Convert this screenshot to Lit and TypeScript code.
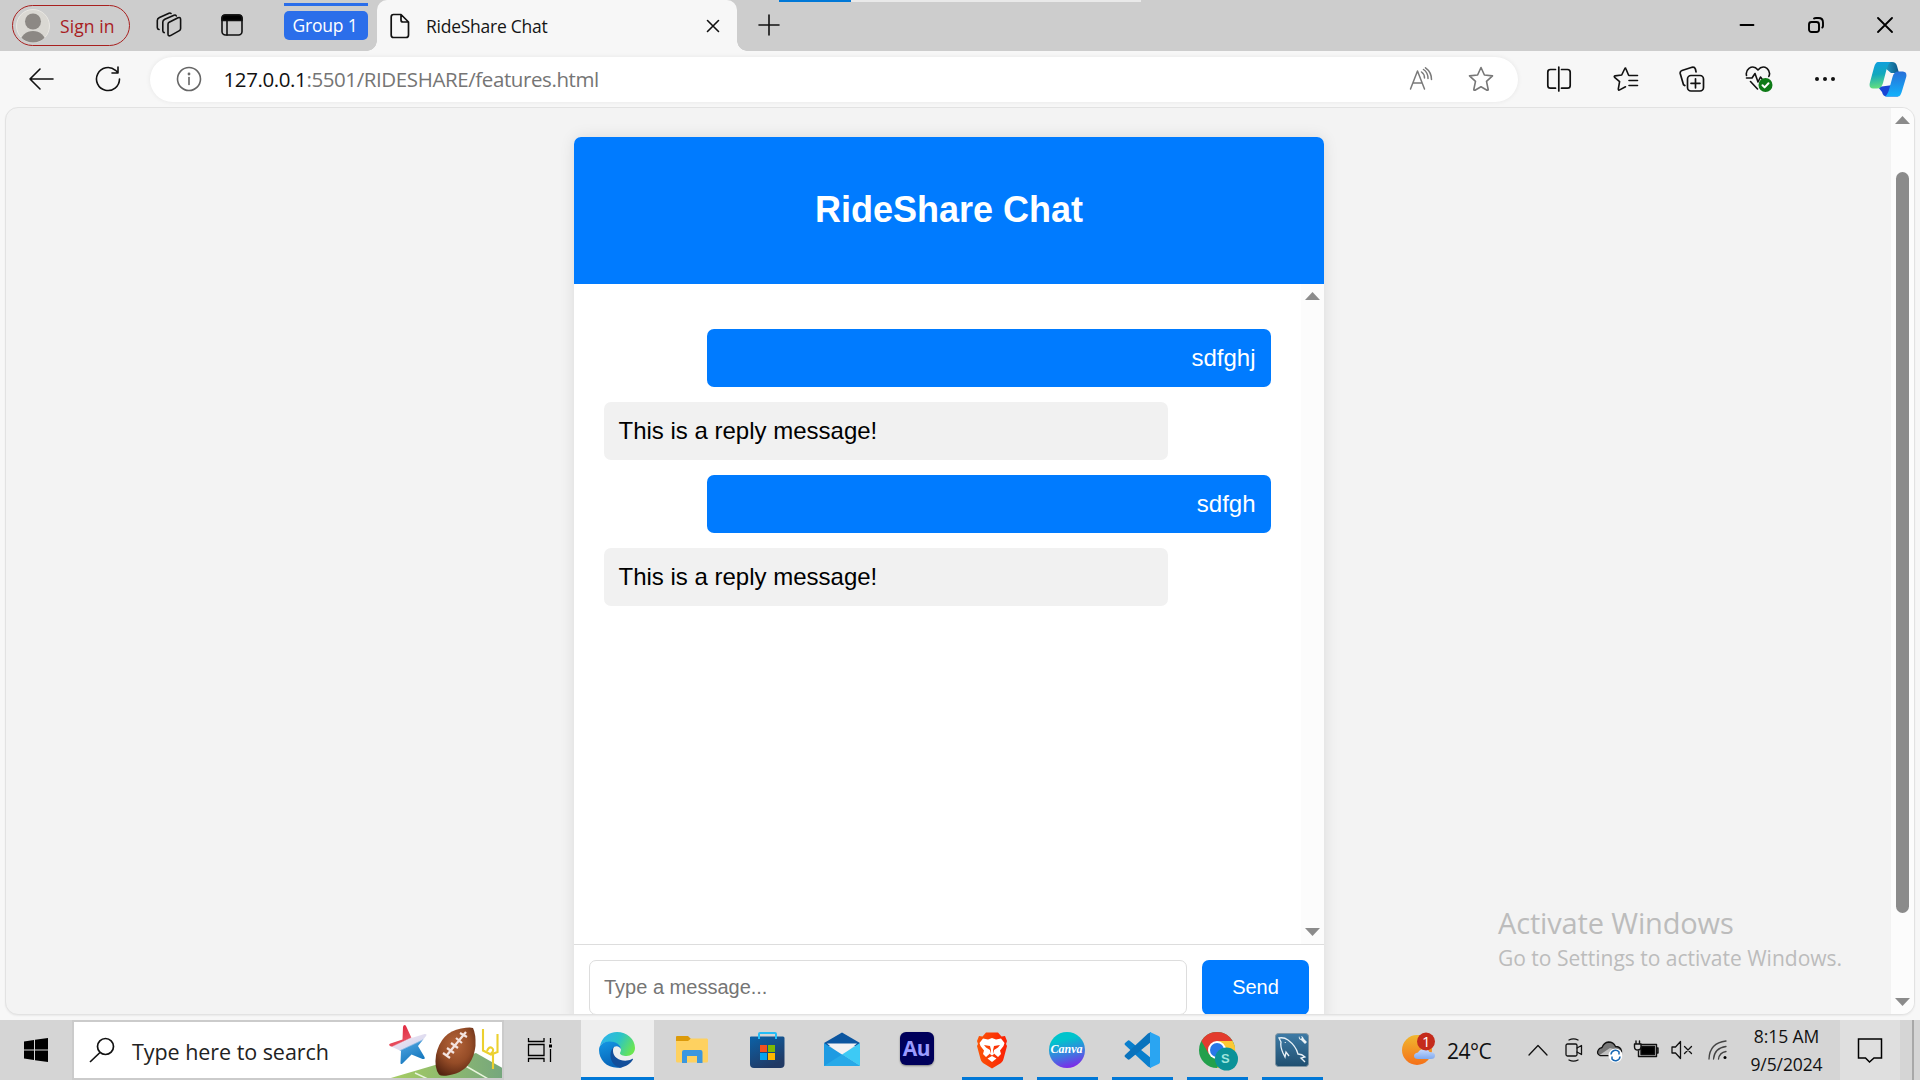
import { LitElement, html, css, svg, type TemplateResult } from "lit";
import { customElement, property } from "lit/decorators.js";

const uiFont = css`"Open Sans", "Noto Sans", sans-serif`;

/* ---------- browser icons ---------- */
const line = (w: number, h: number, body: TemplateResult, stroke = "#111", sw = 1.6) => svg`
  <svg width=${w} height=${h} viewBox="0 0 ${w} ${h}" fill="none" stroke=${stroke} stroke-width=${sw}
    stroke-linecap="round" stroke-linejoin="round">${body}</svg>`;

const icons = {
  workspaces: line(26, 26, svg`
    <path d="M12 12.200Q12 10.800 13.200 10.200L22 5.800Q24.600 4.800 24.600 7.400V16.500Q24.600 18 23.400 18.600L14.500 23.600Q12 24.600 12 22Z"/>
    <path d="M20.300 4Q19.600 2.600 18 3.200L8.800 7.300Q6.800 8.300 6.800 10V18.800Q6.800 20.300 8.200 20.600"/>
    <path d="M15 1.500Q14.300 .700 13 1.200L3.500 5.500Q1.300 6.500 1.300 8.500V15.500Q1.300 17.200 3 17.500"/>`),
  tabActions: line(22, 22, svg`<rect x="1" y="1" width="20" height="20" rx="3.500"/><path d="M1 6.500V4Q1 1 4 1H18Q21 1 21 4V6.500Z" fill="#000"/><path d="M6 7V21"/>`),
  page: line(20, 26, svg`<path d="M3.500 1.500H11L18.500 9V22Q18.500 24.500 16 24.500H3.500Q1.200 24.500 1.200 22V4Q1.200 1.500 3.500 1.500ZM11 1.500V7Q11 9 13 9H18.500"/>`, "#111", 1.7),
  close: line(14, 14, svg`<path d="M1.500 1.500L12.500 12.500M12.500 1.500L1.500 12.500"/>`),
  plus: line(22, 22, svg`<path d="M11 1V21M1 11H21"/>`),
  min: line(16, 16, svg`<path d="M1.500 8H14.500"/>`, "#000", 1.8),
  restore: line(16, 16, svg`<rect x="1" y="5" width="10" height="10" rx="2.500"/><path d="M6 1.500Q6.600 1 8 1H10.500Q15 1 15 5.500V9Q15 9.800 14.300 10.500"/>`, "#000", 1.9),
  winClose: line(16, 16, svg`<path d="M1 1L15 15M15 1L1 15"/>`, "#000", 1.8),
  back: line(26, 24, svg`<path d="M25 12H2M12 2L2 12L12 22"/>`),
  reload: line(26, 26, svg`<path d="M24.500 13A11.500 11.500 0 1 1 20.500 4.300L23 6.800M23 1V7H17"/>`),
  info: line(26, 26, svg`<circle cx="13" cy="13" r="11.500"/><path d="M13 11.500V18.500"/><circle cx="13" cy="8" r=".6" fill="#666"/>`, "#666"),
  read: line(24, 24, svg`<path d="M1.500 22L8.500 4L15.500 22M3.800 16H13.200"/><path d="M12.500 5Q15.500 7 15.500 11M14.500 2.500Q19 5.500 19 11.500M16.500 .800Q22.500 5 22.500 12.500"/>`, "#7a7a7a", 1.5),
  star: line(26, 26, svg`<path d="M13 1.500L16.400 9L24.500 9.900L18.500 15.400L20.200 23.500Q20.200 24.600 19 24.200L13 20.800L7 24.200Q5.800 24.600 5.800 23.500L7.500 15.400L1.500 9.900L9.600 9Z"/>`, "#777"),
  split: line(26, 26, svg`<path d="M9.500 3.500H4.500Q1.800 3.500 1.800 6.200V19.500Q1.800 22.200 4.500 22.200H9.500M15.500 3.500H21.500Q24.200 3.500 24.200 6.200V19.500Q24.200 22.200 21.500 22.200H15.500M12.800 1V25"/>`, "#111", 1.7),
  favorites: line(26, 26, svg`<path d="M15.500 9L13 3Q12.500 1.200 11.600 3L8.700 9L2 9.900Q.700 10.200 1.600 11.300L6.600 15.600L5.300 23Q5.300 24.600 6.700 23.900L12.500 20.800M16 9.500H24.500M16 14.500H24.500M16 19.500H24.500"/>`),
  collections: line(26, 26, svg`<rect x="8.500" y="9.500" width="16" height="15.500" rx="3.500"/><path d="M16.500 12.800V21.800M12 17.300H21M5.800 19.500L4.500 18.700L1.200 7.500Q.800 5.200 3 4.500L13 1.300Q15.600 .800 16.400 3L17 5.800"/>`, "#111", 1.7),
  health: line(28, 28, svg`<path d="M1.500 10.500Q.500 6 4 3.300Q9 0 13 5Q17 0 22 3.300Q26 7 23.800 11.500M1.500 13H7L10 8.500L13 17L15.500 12L17 14M5.500 16.500L12.500 24"/><circle cx="20.500" cy="20" r="7" fill="#0e7a17" stroke="none"/><path d="M17.500 20.300L19.600 22.400L23.500 18.200" stroke="#fff" stroke-width="2"/>`),
  more: line(22, 6, svg`<g fill="#111" stroke="none"><circle cx="3" cy="3" r="2"/><circle cx="11" cy="3" r="2"/><circle cx="19" cy="3" r="2"/></g>`),
  copilot: svg`<svg width="38" height="36" viewBox="0 0 38 36">
    <defs>
      <linearGradient id="cpa" x1="0" y1="0" x2=".1" y2="1"><stop offset="0" stop-color="#0f9ee0"/><stop offset=".5" stop-color="#12a8bd"/><stop offset="1" stop-color="#62dd80"/></linearGradient>
      <linearGradient id="cpb" x1="0" y1="0" x2="0" y2="1"><stop offset="0" stop-color="#276fd8"/><stop offset="1" stop-color="#12b2fb"/></linearGradient>
      <linearGradient id="cpc" x1="0" y1="0" x2="1" y2="0"><stop offset="0" stop-color="#2bc4e8"/><stop offset="1" stop-color="#0c5485"/></linearGradient>
    </defs>
    <path d="M9 1H23Q27 1 28 5L30 12H22Z" fill="url(#cpc)"/>
    <path d="M9 26L13 31Q14 35.500 18 35.500H29L24 24Z" fill="#1845d5"/>
    <path d="M9 1H21.500Q18.500 3.500 17.500 8.500L14 22Q12.500 27.500 8 27.500H4Q-.300 27.500 .800 22L5 6.500Q6.500 1 9 1Z" fill="url(#cpa)"/>
    <path d="M29 35.500H16Q19 33.500 20.500 27L23.500 16Q25 10.500 29 10.500H34Q38.300 11 37.200 16L33 30Q31.500 35.500 29 35.500Z" fill="url(#cpb)"/>
  </svg>`,
};

/* ---------- taskbar artwork ---------- */
const apps = {
  edge: svg`<svg width="36" height="36" viewBox="0 0 36 36">
    <defs>
      <linearGradient id="e1" x1="0" y1=".2" x2="1" y2=".6"><stop offset="0" stop-color="#2fb2ee"/><stop offset=".5" stop-color="#2bc3c8"/><stop offset="1" stop-color="#6be650"/></linearGradient>
      <linearGradient id="e2" x1="0" y1="0" x2=".3" y2="1"><stop offset="0" stop-color="#1597e4"/><stop offset="1" stop-color="#0765b9"/></linearGradient>
    </defs>
    <path d="M1 14C3 5 10 0 18 0C28 0 36 7 36 16C36 21 32 24 27.500 24C24 24 21 22.500 21 21.200C21 20.300 22 19.500 22 17.500C22 14 18 11 12 10C7 9.500 3 11 1 14Z" fill="url(#e1)"/>
    <path d="M0 18C0 12.500 5 9.500 10.500 9.500C17 9.500 22 13 22 17.500C21 14.500 16 12.500 13.500 17C11 22 14 32 23 35.200C10 38 0 29 0 18Z" fill="url(#e2)"/>
    <path d="M15 14.500C9 20 10.500 33 21 35.700C27 35 32 31 34 27.500C34 26.500 33.500 26.600 32.500 27.200C25 31 14 27 14 19C14 17 14.300 15.500 15 14.500Z" fill="#124e9a"/>
  </svg>`,
  files: svg`<svg width="34" height="30" viewBox="0 0 34 30">
    <path d="M1 2Q1 1 2 1H13L16 4L13 8H1Z" fill="#dc9a0a"/><path d="M1 6H13L16 3.500H32Q33 3.500 33 5V26Q33 27.500 31.500 27.500H2.500Q1 27.500 1 26Z" fill="#fed160"/>
    <path d="M7 28V17Q7 15 9 15H25.500Q27.500 15 27.500 17V28H22V21H12V28Z" fill="#3b97df"/></svg>`,
  store: svg`<svg width="36" height="37" viewBox="0 0 36 37">
    <defs><linearGradient id="st" x1="0" y1="0" x2=".5" y2="1"><stop offset="0" stop-color="#0b62a8"/><stop offset="1" stop-color="#213a65"/></linearGradient></defs>
    <path d="M1 5Q1 4.500 2 4.500H34Q35.500 4.500 35.500 6V32Q35.500 36 31.500 36H5Q1 36 1 32Z" fill="url(#st)"/>
    <path d="M10 7V2Q10 1 11 1H26Q27 1 27 2V7" fill="none" stroke="#25bdf7" stroke-width="2"/>
    <path d="M11 13H18V20H11Z" fill="#f3511f"/><path d="M19 13H26V20H19Z" fill="#7db903"/><path d="M11 21H18V28H11Z" fill="#03a2ef"/><path d="M19 21H26V28H19Z" fill="#fcb700"/></svg>`,
  mail: svg`<svg width="36" height="36" viewBox="0 0 36 36">
    <path d="M0 11L18 .500L36 11L34 14H2Z" fill="#0c56a0"/><path d="M3 11.500H33L18 24Z" fill="#f2f2f4"/>
    <path d="M0 11L36 34H0Z" fill="#1e9be2"/><path d="M36 11L18 22.500L36 34Z" fill="#3dcaf5"/><path d="M0 34L18 22.500L36 34Z" fill="#27a9e8"/></svg>`,
  brave: svg`<svg width="32" height="37" viewBox="0 0 32 37">
    <defs><linearGradient id="br" x1="0" y1="0" x2="1" y2="0"><stop offset="0" stop-color="#fb5607"/><stop offset="1" stop-color="#fb1f04"/></linearGradient></defs>
    <path d="M10 .500H22L25.500 4.500L29 4L31 9L30 12L31 14L27.500 27Q27 29.500 25 31L16 36.500L7 31Q5 29.500 4.500 27L1 14L2 12L1 9L3 4L6.500 4.500Z" fill="url(#br)"/>
    <path d="M7 6.500L12 7.500L16 6L20 7.500L25 6.500L28.500 11L27.500 14L24 18.500L25 22L22 25L18 21.500V18L22 15.500L24 13L18 14L17 18L18 22L16 23.500L14 22L15 18L14 14L8 13L10 15.500L14 18V21.500L10 25L7 22L8 18.500L4.500 14L3.500 11Z" fill="#fff"/>
    <path d="M16 24L20.500 26.500L16 30L11.500 26.500Z" fill="#fff"/></svg>`,
  vscode: svg`<svg width="36" height="36" viewBox="0 0 36 36">
    <path d="M4 8.500L1 11Q0 12 1 13L24 34.500L27 36V26L6 9Q5 8 4 8.500Z" fill="#0a7fcd"/>
    <path d="M4 27.500L1 25Q0 24 1 23L24 1.500L27 0V10L6 27Q5 28 4 27.500Z" fill="#0b73bd"/>
    <path d="M26 0L34.500 4Q36 4.700 36 6V30Q36 31.300 34.500 32L26 36Z" fill="#2aa5f2"/></svg>`,
  chrome: svg`<svg width="42" height="42" viewBox="0 0 42 42">
    <circle cx="21" cy="21" r="18" fill="#23a04c"/>
    <path d="M36.600 12A18 18 0 0 1 21 39L28.800 25.500L21 12Z" fill="#fcc934"/>
    <path d="M5.400 12L13.200 25.500L21 21V12H36.600A18 18 0 0 0 5.400 12Z" fill="#e33b2e"/>
    <circle cx="21" cy="21" r="9" fill="#fff"/><circle cx="21" cy="21" r="7" fill="#2878e8"/>
    <circle cx="30.500" cy="30" r="11.500" fill="#0b9298"/></svg>`,
  mysql: svg`<svg width="36" height="36" viewBox="0 0 36 36">
    <defs><linearGradient id="my" x1="0" y1="0" x2="0" y2="1"><stop offset="0" stop-color="#3e7ba6"/><stop offset="1" stop-color="#204f70"/></linearGradient></defs>
    <rect x="1.500" y="1.500" width="33" height="33" rx="3" fill="url(#my)" stroke="#8197a5"/>
    <path d="M9 21Q6 14 7 10L5 6Q10 5 14 8Q22 14 24 22Q28 22 31 25L27 26L31 30M9 21L11 25L12 20L15 24" fill="none" stroke="#e8f1f7" stroke-width="1.300"/>
    <path d="M11 10L11.500 11" stroke="#fff"/><path d="M25 4Q24 7 27 8L31 12L33 10L30 7Q29 4 27 4L28 6L26.500 7Z" fill="#e9f2f6"/></svg>`,
};

const holidayArt = svg`<svg class="art" width="120" height="56" viewBox="0 0 120 56">
  <defs>
    <linearGradient id="gr" x1="0" y1="0" x2="1" y2="0"><stop offset="0" stop-color="#a9cf60"/><stop offset="1" stop-color="#75a67d"/></linearGradient>
    <radialGradient id="fb" cx=".5" cy=".35" r=".7"><stop offset="0" stop-color="#b5653a"/><stop offset=".55" stop-color="#954c27"/><stop offset="1" stop-color="#552411"/></radialGradient>
    <linearGradient id="sr" x1=".2" y1="0" x2=".65" y2="1"><stop offset=".1" stop-color="#e12d43"/><stop offset=".4" stop-color="#e74c5d"/><stop offset=".43" stop-color="#e6dff0"/><stop offset=".56" stop-color="#dcdcf0"/><stop offset=".6" stop-color="#3d97d6"/><stop offset="1" stop-color="#1577bd"/></linearGradient>
  </defs>
  <path d="M2 58L94 31L122 47V58Z" fill="url(#gr)"/>
  <path d="M33 51L48 58M82 43L108 58" stroke="#e8f4dc" stroke-width="1.500"/>
  <path d="M22.500 3Q24 3 24.500 5L29.500 16L42.500 12Q45.500 11.500 44 14L36 24L42.500 35Q43.500 37.500 40.500 37L29.500 32.500L20.500 41.500Q18 43 18.500 40L19 29L8 24Q6 22.500 8.500 21.500L20.500 17.500L21 5Q21.500 3 22.500 3Z" fill="url(#sr)"/>
  <path d="M91 6Q94 12 93.500 24Q91 45 74 51.500Q60 55.500 57 52.500Q52 46 54 33Q59 10 79 6.500Q88 5 91 6Z" fill="url(#fb)"/>
  <path d="M65 33L84 10M61 31L68 36M65 26L72 31M69 21L76 26M74 16L80 21M78 11L85 15" fill="none" stroke="#f3e3df" stroke-width="2.200"/>
  <path d="M101 7V28.500L109 32.500L115.500 30V12M111 31V47M105 29Q107 24 110 26Q113 28.500 108.500 32" fill="none" stroke="#ecd02f" stroke-width="2.100"/>
</svg>`;

const tray: TemplateResult[] = [
  line(20, 14, svg`<path d="M1 12L10 2.500L19 12"/>`, "#111", 1.3),
  line(20, 26, svg`<rect x="2" y="7" width="11" height="12" rx="1.500"/><path d="M13 11L17.500 8.500V17.500L13 15M5 3Q9.500 .800 14 3M5 23Q9.500 25.200 14 23"/>`, "#111", 1.3),
  svg`<svg width="28" height="26" viewBox="0 0 28 26"><path d="M4 18.500Q.500 17 2 13.500Q3 11 6 10.500Q8 5.500 12.500 5Q17.500 5 19.500 9.500Q24.500 9.500 25.500 14V18.500Z" fill="#777" stroke="#111" stroke-width="1.300"/><path d="M3.500 18L14 11L20 12.500V18H4Z" fill="#c0c0c0"/><circle cx="19.500" cy="18.500" r="7" fill="#fff"/><path d="M15 17.500A4.500 4.500 0 0 1 23 15V17.500M24 19.500A4.500 4.500 0 0 1 16 22V19.500" fill="none" stroke="#1767b2" stroke-width="1.500"/></svg>`,
  line(26, 20, svg`<path d="M6 4.500H23.500V16.500H5.500V11M23.500 8H25V13H23.500"/><path d="M8 6.500H21.500V14.500H8Z" fill="#000"/><path d="M1.500 4H8V7Q8 10 4.800 10Q1.500 10 1.500 7ZM3 1V4M6.500 1V4" fill="#d5d5d5"/>`, "#111", 1.4),
  line(24, 20, svg`<path d="M2 7H5.500L10.500 1.500V18.500L5.500 13H2ZM14.500 6.500L21.500 13.500M21.500 6.500L14.500 13.500"/>`, "#111", 1.3),
  line(22, 22, svg`<path d="M2 20Q2.500 4 19 2M6.500 20Q7.500 9 19 7.500M11.500 20Q12.500 13.500 19 12.500"/><circle cx="18" cy="18.500" r="1.500" fill="#000" stroke="none"/>`, "#444", 1.3),
];

@customElement("browser-chrome")
export class BrowserChrome extends LitElement {
  static styles = css`
    :host { display: block; font-family: ${uiFont}; color: #151515; }
    svg { display: block; flex: none; }
    .cell { display: flex; align-items: center; justify-content: center; flex: none; }
    .tabs { height: 51px; background: #cdcdcd; display: flex; align-items: flex-start; position: relative; overflow: hidden; }
    .pill { box-sizing: border-box; margin: 5px 0 0 12px; width: 118px; height: 41px; border: 1.5px solid #a8201f; border-radius: 21px; display: flex; align-items: center; padding-left: 3px; gap: 10px; color: #a8201f; font-size: 17.5px; letter-spacing: .1px; white-space: nowrap; }
    .cell.top { height: 50px; }
    .w1 { width: 78px; } .w2 { width: 48px; margin-right: 28px; }
    .group { width: 84px; margin-top: 3px; border-top: 3px solid #2b6eea; padding-top: 5px; }
    .group span { display: flex; justify-content: center; height: 29px; line-height: 28px; border-radius: 5px; background: #2b6eea; color: #fff; font-size: 17.5px; letter-spacing: -.2px; white-space: nowrap; padding-right: 2px; }
    .tab { box-sizing: border-box; margin-left: 9px; width: 360px; height: 51px; border-radius: 10px 10px 0 0; background: #f7f7f7; display: flex; align-items: center; padding: 1px 17px 0 13px; font-size: 17.5px; position: relative; }
    .tab::before, .tab::after { content: ""; position: absolute; bottom: 0; width: 10px; height: 10px; }
    .tab::before { left: -10px; background: radial-gradient(circle at 0 0, #cdcdcd 9.5px, #f7f7f7 10px); }
    .tab::after { right: -10px; background: radial-gradient(circle at 100% 0, #cdcdcd 9.5px, #f7f7f7 10px); }
    .title { flex: 1; margin-left: 16px; letter-spacing: -.25px; padding-bottom: 1px; }
    .new { width: 64px; }
    .spacer { flex: 1; }
    .win { width: 69px; }
    .end { width: 1px; }
    .load { position: absolute; left: 779px; top: 0; width: 362px; height: 2px; background: #e9e9e9; }
    .load i { display: block; width: 72px; height: 2px; background: #0078d7; }
    .bar { height: 56px; background: #f7f7f7; display: flex; align-items: center; }
    .bar .cell { height: 56px; width: 66.5px; }
    .nav { padding-left: 8px; display: flex; width: 150px; flex: none; box-sizing: border-box; }
    .address { width: 1368px; flex: none; height: 45px; margin-right: 8px; border-radius: 23px; background: #fff; box-shadow: 0 0 5px rgba(0,0,0,.07); display: flex; align-items: center; box-sizing: border-box; padding: 0 24px 0 26px; font-size: 20.5px; }
    .url { flex: 1; margin-left: 21.5px; color: #757575; letter-spacing: -.4px; }
    .url b { color: #111; font-weight: 400; }
    .address svg + svg { margin-left: 35px; }
    .bar .last { width: 56px; margin-left: 1px; }
  `;
  render() {
    return html`
      <div class="tabs">
        <div class="pill">
          <svg width="34" height="34" viewBox="0 0 34 34"><defs><clipPath id="av"><circle cx="17" cy="17" r="16.500"/></clipPath></defs><circle cx="17" cy="17" r="16.500" fill="#dad8d3" stroke="#e9e7e2"/><g fill="#8c8884" clip-path="url(#av)"><circle cx="17" cy="12.500" r="8"/><ellipse cx="17" cy="33" rx="12.500" ry="11"/></g></svg>
          <span>Sign in</span>
        </div>
        <div class="cell top w1">${icons.workspaces}</div>
        <div class="cell top w2">${icons.tabActions}</div>
        <div class="group"><span>Group 1</span></div>
        <div class="tab">${icons.page}<span class="title">RideShare Chat</span>${icons.close}</div>
        <div class="cell top new">${icons.plus}</div>
        <div class="spacer"></div>
        <div class="cell top win">${icons.min}</div>
        <div class="cell top win">${icons.restore}</div>
        <div class="cell top win">${icons.winClose}</div>
        <div class="end"></div>
        <div class="load"><i></i></div>
      </div>
      <div class="bar">
        <div class="nav"><div class="cell">${icons.back}</div><div class="cell">${icons.reload}</div></div>
        <div class="address">${icons.info}<span class="url"><b>127.0.0.1</b>:5501/RIDESHARE/features.html</span>${icons.read}${icons.star}</div>
        <div class="cell">${icons.split}</div><div class="cell">${icons.favorites}</div><div class="cell">${icons.collections}</div>
        <div class="cell">${icons.health}</div><div class="cell">${icons.more}</div><div class="cell last">${icons.copilot}</div>
      </div>`;
  }
}

interface Message { text: string; mine: boolean; }

@customElement("chat-window")
export class ChatWindow extends LitElement {
  @property({ attribute: false }) messages: Message[] = [
    { text: "sdfghj", mine: true },
    { text: "This is a reply message!", mine: false },
    { text: "sdfgh", mine: true },
    { text: "This is a reply message!", mine: false },
  ];
  static styles = css`
    :host { display: block; width: 750px; font-family: "Liberation Sans", Arial, sans-serif; font-size: 24px; background: #fff; border-radius: 7px; box-shadow: 0 0 15px rgba(0,0,0,.1); overflow: hidden; }
    .head { height: 147px; box-sizing: border-box; background: #007bff; color: #fff; text-align: center; padding-top: 52px; font-size: 36px; line-height: 41px; font-weight: 700; }
    .body { height: 660px; display: flex; }
    .list { flex: 1; box-sizing: border-box; padding: 45px 30.5px 0 30px; display: flex; flex-direction: column; gap: 15px; }
    .msg { box-sizing: border-box; width: 563.5px; height: 58px; line-height: 58px; padding: 0 15px 0 14.5px; border-radius: 7px; background: #f1f1f1; color: #000; }
    .mine { align-self: flex-end; background: #007bff; color: #fff; text-align: right; }
    .scroll { width: 23px; background: #fcfcfc; display: flex; flex-direction: column; justify-content: space-between; align-items: center; padding: 8px 0; box-sizing: border-box; }
    .foot { border-top: 1px solid #ddd; padding: 15px; display: flex; gap: 15px; }
    .field { flex: 1; height: 55px; box-sizing: border-box; border: 1px solid #ddd; border-radius: 7px; padding-left: 14px; line-height: 53px; font-size: 20px; color: #757575; }
    .send { width: 107px; height: 55px; border-radius: 7px; background: #007bff; color: #fff; text-align: center; line-height: 54px; font-size: 20px; }
  `;
  render() {
    return html`
      <div class="head">RideShare Chat</div>
      <div class="body">
        <div class="list">${this.messages.map((m) => html`<div class="msg ${m.mine ? "mine" : ""}">${m.text}</div>`)}</div>
        <div class="scroll">
          <svg width="15" height="8"><path d="M0 8L7.500 0L15 8Z" fill="#8b8b8b"/></svg>
          <svg width="15" height="8"><path d="M0 0H15L7.500 8Z" fill="#8b8b8b"/></svg>
        </div>
      </div>
      <div class="foot"><div class="field">Type a message...</div><div class="send">Send</div></div>`;
  }
}

@customElement("task-bar")
export class TaskBar extends LitElement {
  static styles = css`
    :host { display: flex; height: 60px; background: #d5d5d5; font-family: ${uiFont}; color: #111; }
    svg { display: block; flex: none; }
    .start { width: 72px; display: flex; align-items: center; justify-content: center; }
    .search { box-sizing: border-box; width: 432px; height: 60px; border: 2px solid #cbcbcb; background: #fff; display: flex; align-items: center; padding-left: 15px; overflow: hidden; }
    .search span { flex: 1; margin-left: 17px; padding-top: 3px; font-size: 21.5px; letter-spacing: -.05px; white-space: nowrap; color: #222; }
    .view { width: 77px; padding-left: 23px; box-sizing: border-box; display: flex; align-items: center; }
    .app { width: 61px; margin: 0 7px; display: flex; align-items: center; justify-content: center; box-sizing: border-box; border-bottom: 3px solid transparent; padding: 3px 2px 0 0; position: relative; }
    .run { border-bottom-color: #0078d7; }
    .active { width: 73px; margin: 0 1px 0 0; background: #eee; }
    .au { width: 34px; height: 33px; margin-top: -3px; border-radius: 6px; background: #00005b; color: #9b9bff; font: 700 21px/32px ${uiFont}; letter-spacing: -.5px; text-align: center; box-shadow: 0 1px 2px rgba(0,0,0,.4); }
    .canva { width: 36px; height: 36px; border-radius: 50%; background: linear-gradient(165deg, #00c4cc 25%, #3d7be0 60%, #7d2ae8 90%); color: #fff; font: italic 700 12px/35px "Liberation Serif", serif; text-align: center; }
    .s { position: absolute; left: 34px; top: 30px; color: #9ee5dd; font: 700 13px/18px "Liberation Sans", sans-serif; }
    .weather { margin-left: auto; width: 120px; display: flex; align-items: center; font-size: 21px; letter-spacing: -.5px; gap: 10px; }
    .weather svg { margin-right: 1px; }
    .weather span { padding-top: 2px; white-space: nowrap; }
    .tray { display: flex; }
    .tray div { width: 36px; display: flex; align-items: center; justify-content: center; }
    .clock { width: 104px; font-size: 17.5px; line-height: 28px; text-align: center; padding: 2px 3px 0 0; letter-spacing: -.1px; box-sizing: border-box; }
    .note { width: 60px; background: #dfdfdf; display: flex; align-items: center; justify-content: center; }
    .peek { width: 12px; border-right: 2px solid #a8a8a8; margin-right: 6px; }
  `;
  render() {
    const app = (icon: unknown, cls = "") => html`<div class="app ${cls}">${icon}</div>`;
    return html`
      <div class="start"><svg width="24" height="24" viewBox="0 0 24 24"><path d="M0 3.500L10 2V11.500H0ZM11 1.800L24 0V11.500H11ZM0 12.500H10V22L0 20.500ZM11 12.500H24V24L11 22.200Z"/></svg></div>
      <div class="search">
        <svg width="26" height="26" viewBox="0 0 26 26" fill="none" stroke="#111" stroke-width="1.700"><circle cx="16.500" cy="9.500" r="8"/><path d="M11 15.500L1 25"/></svg>
        <span>Type here to search</span>${holidayArt}
      </div>
      <div class="view"><svg width="26" height="26" viewBox="0 0 26 26" fill="none" stroke="#000" stroke-width="1.300"><path d="M1.500 1V4.500H17V1M1.500 7.500H17V18.500H1.500ZM1.500 25V21.500H17V25M23.500 1V6M23.500 12V25"/><path d="M22 7.500H25V10.500H22Z" fill="#000" stroke="none"/></svg></div>
      ${app(apps.edge, "run active")}${app(apps.files)}${app(apps.store)}${app(apps.mail)}
      ${app(html`<div class="au">Au</div>`)}${app(apps.brave, "run")}${app(html`<div class="canva">Canva</div>`, "run")}
      ${app(apps.vscode, "run")}${app(html`${apps.chrome}<span class="s">S</span>`, "run")}${app(apps.mysql, "run")}
      <div class="weather">
        <svg width="36" height="36" viewBox="0 0 36 36"><defs><linearGradient id="sun" x1="0" y1="0" x2="0" y2="1"><stop offset="0" stop-color="#f0b72f"/><stop offset="1" stop-color="#f57018"/></linearGradient><linearGradient id="cl" x1="0" y1="0" x2="0" y2="1"><stop offset="0" stop-color="#c8dcff"/><stop offset="1" stop-color="#80a9ee"/></linearGradient></defs><circle cx="17" cy="18" r="15" fill="url(#sun)"/><path d="M18 27Q14 27 14 24Q14 21 18 20.500Q20 16.500 25 17Q28 17 29.500 20Q35 20 35 23.500Q35 27 31 27Z" fill="url(#cl)"/><circle cx="26" cy="9.500" r="9" fill="#c42b1c"/><text x="26" y="15" text-anchor="middle" font-size="15" fill="#fff" font-family="Open Sans">1</text></svg>
        <span>24°C</span>
      </div>
      <div class="tray">${tray.map((t) => html`<div>${t}</div>`)}</div>
      <div class="clock">8:15 AM<br />9/5/2024</div>
      <div class="note"><svg width="26" height="26" viewBox="0 0 26 26" fill="none" stroke="#000" stroke-width="1.500"><path d="M1.500 2H24.500V21H17L12.500 25L8.500 21H1.500Z"/></svg></div>
      <div class="peek"></div>`;
  }
}

@customElement("app-root")
export class AppRoot extends LitElement {
  static styles = css`
    :host { display: flex; flex-direction: column; width: 1920px; height: 1080px; overflow: hidden; background: #f7f7f7; position: relative; }
    .view { box-sizing: border-box; margin: 0 5px 5px; width: 1910px; height: 908px; border: 1px solid #e2e2e2; border-radius: 13px; background: #f3f3f3; display: flex; overflow: hidden; box-shadow: 0 1px 2px rgba(0,0,0,.06); }
    .page { flex: 1; display: flex; align-items: flex-start; padding: 29px 0 0 568px; overflow: hidden; }
    .scroll { width: 23px; background: #fcfcfc; display: flex; flex-direction: column; align-items: center; padding-top: 8px; box-sizing: border-box; }
    .thumb { width: 13px; height: 741px; border-radius: 7px; background: #8b8b8b; margin: 48px 0 85px; }
    .mark { position: absolute; left: 1498px; top: 900px; color: #bcbcbc; font-family: ${uiFont}; white-space: nowrap; }
    .big { font-size: 29px; line-height: 45px; letter-spacing: -.15px; }
    .small { font-size: 21px; line-height: 26px; letter-spacing: 0; }
  `;
  render() {
    return html`
      <browser-chrome></browser-chrome>
      <div class="view">
        <div class="page"><chat-window></chat-window></div>
        <div class="scroll">
          <svg width="15" height="8"><path d="M0 8L7.500 0L15 8Z" fill="#8b8b8b"/></svg>
          <div class="thumb"></div>
          <svg width="15" height="8"><path d="M0 0H15L7.500 8Z" fill="#8b8b8b"/></svg>
        </div>
      </div>
      <task-bar></task-bar>
      <div class="mark"><div class="big">Activate Windows</div><div class="small">Go to Settings to activate Windows.</div></div>`;
  }
}
